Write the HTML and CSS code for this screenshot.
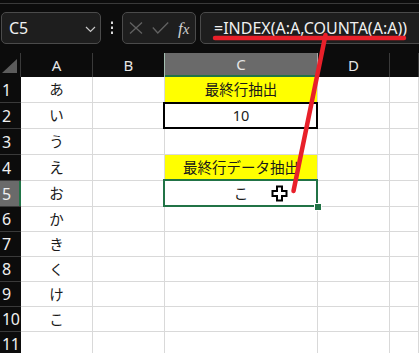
FILE: index.html
```html
<!DOCTYPE html>
<html lang="ja">
<head>
<meta charset="utf-8">
<title>Excel INDEX</title>
<link rel="stylesheet" href="styles.css">
</head>
<body>
<div class="app">
  <div class="toolbar">
    <div class="namebox">
      <span class="nb-text">C5</span>
      <svg class="chev" width="11" height="7" viewBox="0 0 11 7"><path d="M1 1 L5.5 5.5 L10 1" fill="none" stroke="#c8c8c8" stroke-width="1.2"/></svg>
    </div>
    <div class="dots">
      <svg width="4" height="14" viewBox="0 0 4 14"><rect x="1" y="0.5" width="2" height="2.5" fill="#d8d8d8"/><rect x="1" y="5.5" width="2" height="2.5" fill="#d8d8d8"/><rect x="1" y="10.5" width="2" height="2.5" fill="#d8d8d8"/></svg>
    </div>
    <div class="fxbox">
      <svg class="ico-x" width="14" height="12" viewBox="0 0 14 12"><path d="M1 0.5 L13 11.5 M13 0.5 L1 11.5" stroke="#626262" stroke-width="1.3" fill="none"/></svg>
      <svg class="ico-ok" width="17" height="12" viewBox="0 0 17 12"><path d="M0.8 5.5 L5.8 11 L16.2 0.5" stroke="#626262" stroke-width="1.3" fill="none"/></svg>
      <span class="fx">f<i>x</i></span>
    </div>
    <div class="formula"><span class="ftext">=INDEX(A:A,COUNTA(A:A))</span></div>
  </div>

  <div class="sheet">
    <div class="corner"><span class="tri"></span></div>
    <div class="colhead">A</div>
    <div class="colhead colhead-b">B</div>
    <div class="colhead colhead-sel">C</div>
    <div class="colhead">D</div>
    <div class="colhead"></div>

    <div class="rowhead">1</div><div class="cell">あ</div><div class="cell"></div><div class="cell cell-yellow">最終行抽出</div><div class="cell"></div><div class="cell"></div>
    <div class="rowhead">2</div><div class="cell">い</div><div class="cell"></div><div class="cell cell-boxed">10</div><div class="cell"></div><div class="cell"></div>
    <div class="rowhead">3</div><div class="cell">う</div><div class="cell"></div><div class="cell"></div><div class="cell"></div><div class="cell"></div>
    <div class="rowhead">4</div><div class="cell">え</div><div class="cell"></div><div class="cell cell-yellow">最終行データ抽出</div><div class="cell"></div><div class="cell"></div>
    <div class="rowhead rowhead-sel">5</div><div class="cell">お</div><div class="cell"></div><div class="cell cell-active">こ<span class="handle"></span><svg class="cursor" width="17" height="17" viewBox="0 0 17 17"><path d="M6 1.5 H11 V6 H15.5 V11 H11 V15.5 H6 V11 H1.5 V6 H6 Z" fill="#fff" stroke="#000" stroke-width="2" stroke-linejoin="miter"/></svg></div><div class="cell"></div><div class="cell"></div>
    <div class="rowhead">6</div><div class="cell">か</div><div class="cell"></div><div class="cell"></div><div class="cell"></div><div class="cell"></div>
    <div class="rowhead">7</div><div class="cell">き</div><div class="cell"></div><div class="cell"></div><div class="cell"></div><div class="cell"></div>
    <div class="rowhead">8</div><div class="cell">く</div><div class="cell"></div><div class="cell"></div><div class="cell"></div><div class="cell"></div>
    <div class="rowhead">9</div><div class="cell">け</div><div class="cell"></div><div class="cell"></div><div class="cell"></div><div class="cell"></div>
    <div class="rowhead">10</div><div class="cell">こ</div><div class="cell"></div><div class="cell"></div><div class="cell"></div><div class="cell"></div>
    <div class="rowhead">11</div><div class="cell"></div><div class="cell"></div><div class="cell"></div><div class="cell"></div><div class="cell"></div>
  </div>

  <svg class="annot" width="419" height="353" viewBox="0 0 419 353">
    <path d="M215 38 L404 38" stroke="#e8202a" stroke-width="4.5" stroke-linecap="round" fill="none"/>
    <path d="M325.5 35 L293.5 191" stroke="#e8202a" stroke-width="4.5" stroke-linecap="round" fill="none"/>
  </svg>
</div>
</body>
</html>
```
FILE: styles.css
```css
* { box-sizing: border-box; }
html, body {
  margin: 0;
  padding: 0;
  background: #0c0c0c;
  overflow: hidden;
}
.app {
  position: relative;
  width: 419px;
  height: 353px;
  overflow: hidden;
  font-family: "Noto Sans", "Noto Sans CJK JP", sans-serif;
}

/* ---------- formula bar ---------- */
.toolbar {
  height: 50px;
  margin-top: 3px;
  border-top: 1px solid #3a3a3a;
  padding: 8px 0 0 1px;
  display: flex;
  align-items: flex-start;
  background: #0c0c0c;
}
.namebox, .fxbox, .formula {
  height: 32px;
  border: 1px solid #4b4b4b;
  border-radius: 5px;
  background: #1e1e1e;
  display: flex;
  align-items: center;
}
.namebox {
  width: 100px;
  padding-left: 7px;
  justify-content: space-between;
  padding-right: 4px;
}
.nb-text {
  color: #f2f2f2;
  font-size: 16px;
  line-height: 1;
}
.chev { margin-top: 2px; }
.dots {
  width: 21px;
  height: 32px;
  display: flex;
  align-items: center;
  justify-content: center;
}
.fxbox {
  width: 74px;
  padding-left: 6px;
  gap: 8px;
}
.ico-ok { margin-left: 1px; }
.fx {
  font-family: "Liberation Serif", "DejaVu Serif", serif;
  font-style: italic;
  color: #cfcfcf;
  font-size: 17px;
  line-height: 1;
  margin-left: 1px;
}
.fx i { font-style: italic; font-size: 15px; }
.formula {
  flex: 1;
  margin-left: 4px;
  margin-right: -12px;
  padding-left: 13px;
}
.ftext {
  color: #f0f0f0;
  font-size: 16px;
  line-height: 1;
  margin-top: -1px;
  white-space: nowrap;
}

/* ---------- sheet ---------- */
.sheet {
  display: grid;
  grid-template-columns: 21px 72px 72px 153px 72px 1fr;
  grid-template-rows: 24px repeat(5, 26px) repeat(5, 25px) 24px;
  background: #ffffff;
}
.corner {
  background: #0c0c0c;
  border-right: 1px solid #3a3a3a;
  position: relative;
}
.tri {
  position: absolute;
  left: 2px;
  top: 6px;
  width: 15px;
  height: 14px;
  background: #5c5c5c;
  clip-path: polygon(100% 0, 100% 100%, 0 100%);
}
.colhead {
  background: #0c0c0c;
  color: #e6e6e6;
  font-size: 15px;
  display: flex;
  align-items: center;
  justify-content: center;
  border-right: 1px solid #3a3a3a;
  padding-bottom: 1px;
}
.colhead-b { border-right-color: #a4bfb1; }
.colhead-sel {
  background: #6a6a6a;
  border-bottom: 2px solid #217346;
  border-right-color: #a8a8a8;
  padding-bottom: 0;
}
.rowhead {
  background: #0c0c0c;
  color: #f0f0f0;
  font-size: 16px;
  line-height: 1;
  display: flex;
  align-items: center;
  padding-left: 2px;
  border-bottom: 1px solid #3a3a3a;
  overflow: hidden;
  letter-spacing: -0.5px;
}
.rowhead-sel {
  background: #6a6a6a;
  box-shadow: inset -2px 0 0 #217346;
}
.cell {
  position: relative;
  border-right: 1px solid #d9d9d9;
  border-bottom: 1px solid #d9d9d9;
  display: flex;
  align-items: center;
  justify-content: center;
  font-size: 14.5px;
  color: #1a1a1a;
  line-height: 1;
  white-space: nowrap;
  background: #fff;
}
.cell-yellow { background: #ffff00; }
.cell-boxed::after {
  content: "";
  position: absolute;
  left: -2px;
  top: -1px;
  right: -1px;
  bottom: -1px;
  border: 2px solid #000;
}
.cell-active::after {
  content: "";
  position: absolute;
  left: -2px;
  top: -2px;
  right: -1px;
  bottom: -1px;
  border: 2px solid #217346;
}
.handle {
  position: absolute;
  right: -4px;
  bottom: -4px;
  width: 6px;
  height: 6px;
  background: #217346;
  border: 1px solid #fff;
  z-index: 2;
  box-sizing: content-box;
  margin: -1px;
}
.cursor {
  position: absolute;
  left: 106px;
  top: 4px;
}
.annot {
  position: absolute;
  left: 0;
  top: 0;
  pointer-events: none;
}
```
